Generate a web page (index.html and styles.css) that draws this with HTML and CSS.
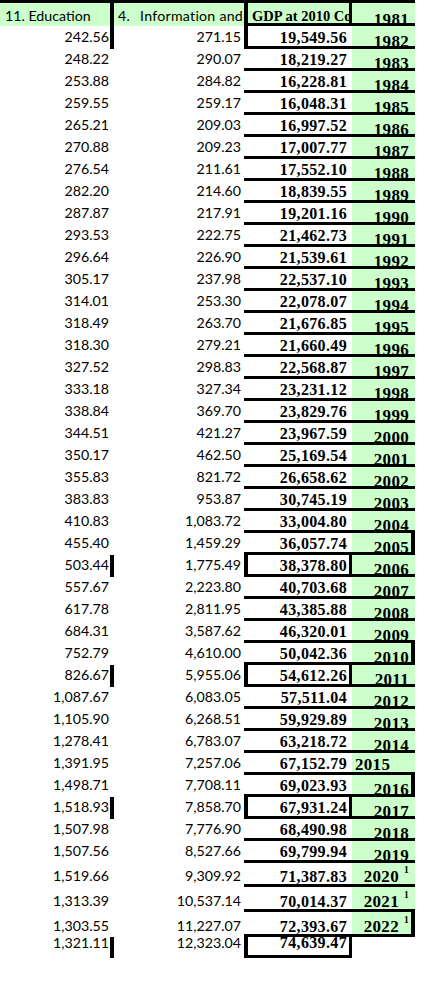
FILE: index.html
```html
<!DOCTYPE html>
<html>
<head>
<meta charset="utf-8">
<title>GDP table</title>
<link rel="stylesheet" href="styles.css">
</head>
<body>
<div class="sheet">
  <div class="topbar"></div>
  <div class="row head">
    <div class="cell a">11. Education</div>
    <div class="cell b"><span class="num">4.</span>Information and</div>
    <div class="cell c">GDP at 2010 Co</div>
    <div class="cell d"><span>1981</span></div>
  </div>
  <div class="row tall23 first"><div class="cell a">242.56</div><div class="cell b">271.15</div><div class="cell c">19,549.56</div><div class="cell d"><span>1982</span></div></div>
  <div class="row"><div class="cell a">248.22</div><div class="cell b">290.07</div><div class="cell c">18,219.27</div><div class="cell d"><span>1983</span></div></div>
  <div class="row"><div class="cell a">253.88</div><div class="cell b">284.82</div><div class="cell c">16,228.81</div><div class="cell d"><span>1984</span></div></div>
  <div class="row"><div class="cell a">259.55</div><div class="cell b">259.17</div><div class="cell c">16,048.31</div><div class="cell d"><span>1985</span></div></div>
  <div class="row"><div class="cell a">265.21</div><div class="cell b">209.03</div><div class="cell c">16,997.52</div><div class="cell d"><span>1986</span></div></div>
  <div class="row"><div class="cell a">270.88</div><div class="cell b">209.23</div><div class="cell c">17,007.77</div><div class="cell d"><span>1987</span></div></div>
  <div class="row"><div class="cell a">276.54</div><div class="cell b">211.61</div><div class="cell c">17,552.10</div><div class="cell d"><span>1988</span></div></div>
  <div class="row"><div class="cell a">282.20</div><div class="cell b">214.60</div><div class="cell c">18,839.55</div><div class="cell d"><span>1989</span></div></div>
  <div class="row"><div class="cell a">287.87</div><div class="cell b">217.91</div><div class="cell c">19,201.16</div><div class="cell d"><span>1990</span></div></div>
  <div class="row"><div class="cell a">293.53</div><div class="cell b">222.75</div><div class="cell c">21,462.73</div><div class="cell d"><span>1991</span></div></div>
  <div class="row"><div class="cell a">296.64</div><div class="cell b">226.90</div><div class="cell c">21,539.61</div><div class="cell d"><span>1992</span></div></div>
  <div class="row"><div class="cell a">305.17</div><div class="cell b">237.98</div><div class="cell c">22,537.10</div><div class="cell d"><span>1993</span></div></div>
  <div class="row"><div class="cell a">314.01</div><div class="cell b">253.30</div><div class="cell c">22,078.07</div><div class="cell d"><span>1994</span></div></div>
  <div class="row"><div class="cell a">318.49</div><div class="cell b">263.70</div><div class="cell c">21,676.85</div><div class="cell d"><span>1995</span></div></div>
  <div class="row"><div class="cell a">318.30</div><div class="cell b">279.21</div><div class="cell c">21,660.49</div><div class="cell d"><span>1996</span></div></div>
  <div class="row"><div class="cell a">327.52</div><div class="cell b">298.83</div><div class="cell c">22,568.87</div><div class="cell d"><span>1997</span></div></div>
  <div class="row"><div class="cell a">333.18</div><div class="cell b">327.34</div><div class="cell c">23,231.12</div><div class="cell d"><span>1998</span></div></div>
  <div class="row"><div class="cell a">338.84</div><div class="cell b">369.70</div><div class="cell c">23,829.76</div><div class="cell d"><span>1999</span></div></div>
  <div class="row"><div class="cell a">344.51</div><div class="cell b">421.27</div><div class="cell c">23,967.59</div><div class="cell d"><span>2000</span></div></div>
  <div class="row"><div class="cell a">350.17</div><div class="cell b">462.50</div><div class="cell c">25,169.54</div><div class="cell d"><span>2001</span></div></div>
  <div class="row"><div class="cell a">355.83</div><div class="cell b">821.72</div><div class="cell c">26,658.62</div><div class="cell d"><span>2002</span></div></div>
  <div class="row"><div class="cell a">383.83</div><div class="cell b">953.87</div><div class="cell c">30,745.19</div><div class="cell d"><span>2003</span></div></div>
  <div class="row"><div class="cell a">410.83</div><div class="cell b">1,083.72</div><div class="cell c">33,004.80</div><div class="cell d"><span>2004</span></div></div>
  <div class="row pre"><div class="cell a">455.40</div><div class="cell b">1,459.29</div><div class="cell c">36,057.74</div><div class="cell d"><span>2005</span></div></div>
  <div class="row box"><div class="cell a">503.44</div><div class="cell b">1,775.49</div><div class="cell c">38,378.80</div><div class="cell d"><span>2006</span></div></div>
  <div class="row"><div class="cell a">557.67</div><div class="cell b">2,223.80</div><div class="cell c">40,703.68</div><div class="cell d"><span>2007</span></div></div>
  <div class="row"><div class="cell a">617.78</div><div class="cell b">2,811.95</div><div class="cell c">43,385.88</div><div class="cell d"><span>2008</span></div></div>
  <div class="row"><div class="cell a">684.31</div><div class="cell b">3,587.62</div><div class="cell c">46,320.01</div><div class="cell d"><span>2009</span></div></div>
  <div class="row pre"><div class="cell a">752.79</div><div class="cell b">4,610.00</div><div class="cell c">50,042.36</div><div class="cell d"><span>2010</span></div></div>
  <div class="row box"><div class="cell a">826.67</div><div class="cell b">5,955.06</div><div class="cell c">54,612.26</div><div class="cell d"><span>2011</span></div></div>
  <div class="row"><div class="cell a">1,087.67</div><div class="cell b">6,083.05</div><div class="cell c">57,511.04</div><div class="cell d"><span>2012</span></div></div>
  <div class="row"><div class="cell a">1,105.90</div><div class="cell b">6,268.51</div><div class="cell c">59,929.89</div><div class="cell d"><span>2013</span></div></div>
  <div class="row"><div class="cell a">1,278.41</div><div class="cell b">6,783.07</div><div class="cell c">63,218.72</div><div class="cell d"><span>2014</span></div></div>
  <div class="row"><div class="cell a">1,391.95</div><div class="cell b">7,257.06</div><div class="cell c">67,152.79</div><div class="cell d left"><span>2015</span></div></div>
  <div class="row pre"><div class="cell a">1,498.71</div><div class="cell b">7,708.11</div><div class="cell c">69,023.93</div><div class="cell d"><span>2016</span></div></div>
  <div class="row box"><div class="cell a">1,518.93</div><div class="cell b">7,858.70</div><div class="cell c">67,931.24</div><div class="cell d"><span>2017</span></div></div>
  <div class="row"><div class="cell a">1,507.98</div><div class="cell b">7,776.90</div><div class="cell c">68,490.98</div><div class="cell d"><span>2018</span></div></div>
  <div class="row"><div class="cell a">1,507.56</div><div class="cell b">8,527.66</div><div class="cell c">69,799.94</div><div class="cell d"><span>2019</span></div></div>
  <div class="row tall tall24"><div class="cell a">1,519.66</div><div class="cell b">9,309.92</div><div class="cell c">71,387.83</div><div class="cell d"><span>2020<sup>1</sup></span></div></div>
  <div class="row tall tall25"><div class="cell a">1,313.39</div><div class="cell b">10,537.14</div><div class="cell c">70,014.37</div><div class="cell d"><span>2021<sup>1</sup></span></div></div>
  <div class="row tall tall25 pre"><div class="cell a">1,303.55</div><div class="cell b">11,227.07</div><div class="cell c">72,393.67</div><div class="cell d"><span>2022<sup>1</sup></span></div></div>
  <div class="row box last"><div class="cell a">1,321.11</div><div class="cell b">12,323.04</div><div class="cell c">74,639.47</div><div class="cell d"></div></div>
</div>
</body>
</html>
```

FILE: styles.css
```css
* { box-sizing: border-box; }
html, body { margin: 0; padding: 0; background: #ffffff; }
body { width: 429px; height: 981px; overflow: hidden; }

.sheet { width: 415px; display: flex; flex-direction: column; }
.topbar { height: 3px; background: #000; }

.row { display: flex; height: 22px; }
.tall23 { height: 23px; }
.tall24 { height: 24px; }
.tall25 { height: 25px; }

.cell {
  display: flex;
  align-items: flex-end;
  justify-content: flex-end;
  white-space: nowrap;
  color: #000;
}

.a, .b {
  font-family: Lato, "Liberation Sans", sans-serif;
  font-size: 14.2px;
  line-height: 1;
  padding-bottom: 4.5px;
}
.a { width: 114px; padding-right: 5px; }
.b { width: 130px; padding-right: 3px; }

.c {
  width: 108px;
  padding-right: 5px;
  padding-bottom: 0.4px;
  border-bottom: 3px solid #000;
  font-family: "Liberation Serif", serif;
  font-weight: 700;
  font-size: 16px;
  line-height: 1;
  letter-spacing: 0.35px;
}

.d {
  width: 63px;
  padding-right: 6px;
  background: #ccffcc;
  border-bottom: 3px solid #000;
  font-family: "Liberation Serif", serif;
  font-weight: 700;
  font-size: 17px;
  line-height: 1;
  letter-spacing: 0.3px;
}
.d span { margin-bottom: -3.8px; }
.d sup {
  font-size: 9.5px;
  line-height: 0;
  vertical-align: 9px;
  margin-left: 5px;
}
.d.left { justify-content: flex-start; padding-left: 3px; }
.d.left span { margin-bottom: -1px; }

/* taller rows holding superscripts */
.tall .a, .tall .b { padding-bottom: 3.5px; }
.tall .c { line-height: 12.8px; padding-bottom: 0; }
.tall .d span { margin-bottom: -0.8px; }

/* boxed rows */
.first .a, .box .a { border-right: 4px solid #000; padding-right: 1px; }
.first .c { border-left: 4px solid #000; }
.box .c { border-left: 4px solid #000; border-right: 3px solid #000; padding-right: 2px; }
.pre .d { border-right: 4px solid #000; padding-right: 2px; }

/* last row */
.last { height: 21px; }
.last .a, .last .b { padding-bottom: 7.5px; }
.last .c { padding-bottom: 4.4px; }
.last .d { background: transparent; border-bottom: 0; }

/* header row */
.head { height: 23px; }
.head .cell { background: #ccffcc; overflow: hidden; }
.head .a {
  justify-content: flex-start;
  padding: 0 0 3px 5px;
  border-right: 4px solid #000;
}
.head .b { justify-content: flex-start; padding: 0 0 3px 4px; letter-spacing: 0.25px; }
.head .b .num { margin-right: 10px; }
.head .c {
  justify-content: flex-start;
  padding: 0 0 0 4px;
  border-left: 4px solid #000;
  border-right: 3px solid #000;
  font-size: 14.5px;
  letter-spacing: 0;
}
.head .d { overflow: visible; }
.head .d span { margin-bottom: -4.8px; }
```
